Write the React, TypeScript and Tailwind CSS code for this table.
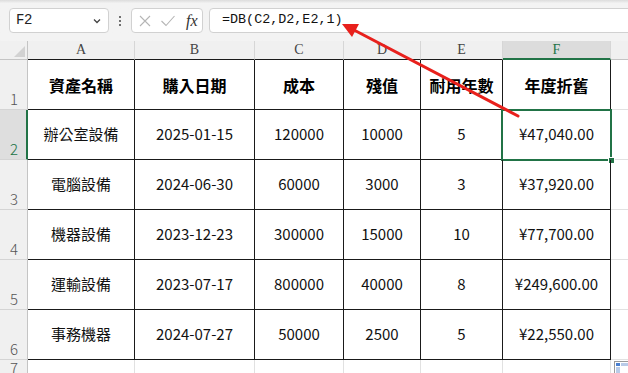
import React from 'react'

const cols = [
  { key: 'A', w: 'w-[107px]' },
  { key: 'B', w: 'w-[120px]' },
  { key: 'C', w: 'w-[89px]' },
  { key: 'D', w: 'w-[77px]' },
  { key: 'E', w: 'w-[82px]' },
  { key: 'F', w: 'w-[108px]' },
]

const header = ['資產名稱', '購入日期', '成本', '殘值', '耐用年數', '年度折舊']

const rows = [
  ['辦公室設備', '2025-01-15', '120000', '10000', '5', '¥47,040.00'],
  ['電腦設備', '2024-06-30', '60000', '3000', '3', '¥37,920.00'],
  ['機器設備', '2023-12-23', '300000', '15000', '10', '¥77,700.00'],
  ['運輸設備', '2023-07-17', '800000', '40000', '8', '¥249,600.00'],
  ['事務機器', '2024-07-27', '50000', '2500', '5', '¥22,550.00'],
]

const cjk = "font-['Noto_Sans_CJK_TC','Noto_Sans_CJK_JP',sans-serif]"
const headFont = "font-['Liberation_Serif',serif]"

const RowHeader = ({ n, selected }: { n: number; selected?: boolean }) => (
  <div
    className={`w-[28px] h-[50px] shrink-0 flex items-end pl-[10px] pb-[1px] text-[15px] leading-[18px] ${cjk} font-light border-b border-[#d4d4d4] ${
      selected ? 'bg-[#dedede] text-[#217346] border-r-2 border-r-[#217346]' : 'bg-[#f0f0f0] text-[#555] border-r border-r-[#c4c4c4]'
    }`}
  >
    {n}
  </div>
)

export default function App() {
  return (
    <div className="relative w-[628px] h-[373px] overflow-hidden bg-white select-none">
      {/* formula bar */}
      <div className="h-[41px] bg-[#f3f3f3] bg-gradient-to-b from-[#dcdcdc] via-[#f3f3f3] via-[8%] to-[#f3f3f3]">
        <div className="flex items-center pt-[8px] pl-[9px] gap-0">
          <div className="w-[100px] h-[25px] bg-white border border-[#d1d1d1] rounded-[4px] flex items-center justify-between pl-[6px] pr-[6px]">
            <span className="font-['Liberation_Mono',monospace] text-[14px] text-[#222] tracking-[-0.5px]">F2</span>
            <svg width="10" height="10" viewBox="0 0 10 10">
              <path d="M2 3.5 L5 6.5 L8 3.5" fill="none" stroke="#444" strokeWidth="1.3" />
            </svg>
          </div>
          <div className="w-[22px] flex flex-col items-center gap-[2px]">
            <span className="w-[2px] h-[2px] bg-[#444] rounded-full" />
            <span className="w-[2px] h-[2px] bg-[#444] rounded-full" />
            <span className="w-[2px] h-[2px] bg-[#444] rounded-full" />
          </div>
          <div className="w-[72px] h-[25px] bg-white border border-[#d1d1d1] rounded-[4px] flex items-center pl-[6px] gap-[8px]">
            <svg width="14" height="14" viewBox="0 0 14 14">
              <path d="M2 2 L12 12 M12 2 L2 12" stroke="#b5b5b5" strokeWidth="1.1" />
            </svg>
            <svg width="16" height="14" viewBox="0 0 16 14">
              <path d="M1.5 7 L6 11.5 L14.5 2" fill="none" stroke="#b5b5b5" strokeWidth="1.1" />
            </svg>
            <span className="font-['Liberation_Serif',serif] italic text-[16px] text-[#333] leading-none ml-[2px]">
              fx
            </span>
          </div>
          <div className="flex-1 ml-[6px] mr-[-12px] h-[25px] bg-white border border-[#d1d1d1] rounded-[4px] flex items-center pl-[12px]">
            <span className="font-['Liberation_Mono',monospace] text-[13.4px] text-[#111]">=DB(C2,D2,E2,1)</span>
          </div>
        </div>
      </div>

      {/* column headers */}
      <div className={`flex h-[19px] bg-[#f0f0f0] ${headFont}`}>
        <div className="w-[28px] shrink-0 border-r border-[#c4c4c4] border-b border-b-[#c4c4c4] relative">
          <svg className="absolute right-[2px] bottom-[2px]" width="11" height="11" viewBox="0 0 11 11">
            <path d="M11 0 L11 11 L0 11 Z" fill="#d2d2d2" />
          </svg>
        </div>
        {cols.map((c) => (
          <div
            key={c.key}
            className={`${c.w} shrink-0 flex items-center justify-center text-[14px] leading-none border-r border-r-[#d6d6d6] ${
              c.key === 'F'
                ? 'bg-[#dcdcdc] text-[#217346] border-b-2 border-b-[#217346]'
                : 'text-[#444] border-b border-b-[#1a1a1a]'
            }`}
          >
            {c.key}
          </div>
        ))}
        <div className="flex-1 border-b border-[#c4c4c4]" />
      </div>

      {/* row 1 */}
      <div className="flex">
        <RowHeader n={1} />
        {header.map((h, i) => (
          <div
            key={i}
            className={`${cols[i].w} shrink-0 h-[50px] flex items-center justify-center border-r border-b border-[#1a1a1a] ${cjk} font-bold text-[16px] text-black ${
              i === 5 ? 'border-b-0' : ''
            }`}
          >
            {h}
          </div>
        ))}
        <div className="flex-1 h-[50px] border-b border-[#e1e1e1]" />
      </div>

      {/* data rows */}
      {rows.map((r, ri) => (
        <div className="flex" key={ri}>
          <RowHeader n={ri + 2} selected={ri === 0} />
          {r.map((v, ci) => (
            <div
              key={ci}
              className={`${cols[ci].w} shrink-0 h-[50px] relative flex items-center justify-center border-r border-b border-[#1a1a1a] ${cjk} text-[15px] text-[#111]`}
            >
              {v}
              {ri === 0 && ci === 5 && (
                <>
                  <div className="absolute left-[-2px] top-[-1px] right-[-2px] bottom-[-2px] border-2 border-[#217346]" />
                  <div className="absolute right-[-5px] bottom-[-5px] w-[7px] h-[7px] bg-[#217346] border border-white" />
                </>
              )}
            </div>
          ))}
          <div className="flex-1 h-[50px] border-b border-[#e1e1e1]" />
        </div>
      ))}

      {/* row 7 */}
      <div className="flex h-[13px]">
        <div className={`w-[28px] shrink-0 bg-[#f0f0f0] border-r border-[#c4c4c4] pl-[10px] text-[15px] leading-[16px] text-[#555] ${cjk} font-light`}>
          7
        </div>
        {cols.map((c) => (
          <div key={c.key} className={`${c.w} shrink-0 border-r border-[#e1e1e1]`} />
        ))}
        <div className="flex-1" />
      </div>

      {/* quick analysis */}
      <svg className="absolute left-[614px] top-[361px]" width="16" height="14" viewBox="0 0 16 14">
        <rect x="0.5" y="0.5" width="15" height="13" fill="#fff" stroke="#9a9a9a" />
        <rect x="2" y="2" width="4" height="3" fill="#4a7fd0" />
        <rect x="7" y="2" width="7" height="3" fill="#b9cbe8" />
        <rect x="2" y="6" width="4" height="6" fill="#b9cbe8" />
      </svg>

      {/* red arrow */}
      <svg className="absolute inset-0 pointer-events-none" width="628" height="373" viewBox="0 0 628 373">
        <line x1="518" y1="116" x2="354" y2="30" stroke="#e8201c" strokeWidth="3" strokeLinecap="round" />
        <path d="M342 24 L359 24 L352 37 Z" fill="#e8201c" />
      </svg>
    </div>
  )
}
